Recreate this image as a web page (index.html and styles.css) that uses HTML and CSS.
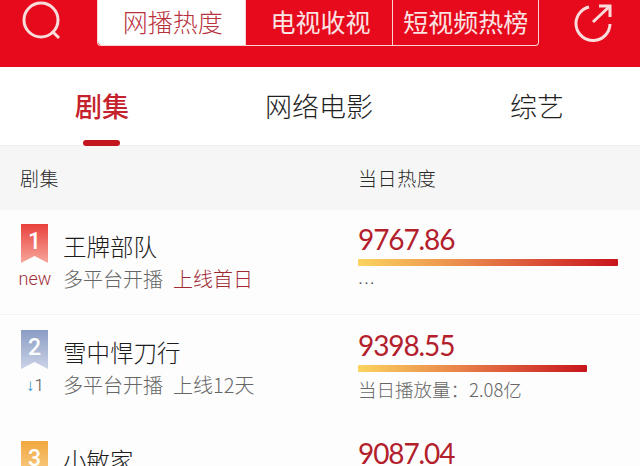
FILE: index.html
```html
<!DOCTYPE html>
<html lang="zh-CN">
<head>
    <meta charset="UTF-8">
    <title>网播热度</title>
    <link rel="stylesheet" href="styles.css">
</head>
<body>
    <header class="topbar">
        <svg class="icon" width="44" height="44" viewBox="0 0 44 44">
            <circle cx="21" cy="20" r="17" fill="none" stroke="#fbdcdc" stroke-width="3"/>
            <path d="M32 31l7 7" fill="none" stroke="#fbdcdc" stroke-width="3"/>
        </svg>
        <nav class="switch">
            <span class="switch-item active">网播热度</span>
            <span class="switch-item">电视收视</span>
            <span class="switch-item">短视频热榜</span>
        </nav>
        <svg class="icon" width="44" height="44" viewBox="0 0 44 44">
            <path d="M17 7A17 17 0 1 0 38 24" fill="none" stroke="#fbdcdc" stroke-width="3"/>
            <path d="M21 22L38 6M27 6h11v11" fill="none" stroke="#fbdcdc" stroke-width="3"/>
        </svg>
    </header>

    <div class="tabs">
        <span class="tab current">剧集</span>
        <span class="tab">网络电影</span>
        <span class="tab">综艺</span>
    </div>

    <div class="table-head">
        <span>剧集</span>
        <span>当日热度</span>
    </div>

    <div class="row">
        <div class="rank">
            <div class="ribbon red">1</div>
            <div class="change new">new</div>
        </div>
        <div class="info">
            <div class="name">王牌部队</div>
            <div class="sub">多平台开播<em class="hot">上线首日</em></div>
        </div>
        <div class="heat">
            <div class="score">9767.86</div>
            <div class="bar" style="width: 260px"></div>
            <div class="note dots">···</div>
        </div>
    </div>

    <div class="row second">
        <div class="rank">
            <div class="ribbon blue">2</div>
            <div class="change"><b class="down">↓</b>1</div>
        </div>
        <div class="info">
            <div class="name">雪中悍刀行</div>
            <div class="sub">多平台开播<em>上线12天</em></div>
        </div>
        <div class="heat">
            <div class="score">9398.55</div>
            <div class="bar" style="width: 229px"></div>
            <div class="note">当日播放量：2.08亿</div>
        </div>
    </div>

    <div class="row third">
        <div class="rank">
            <div class="ribbon orange">3</div>
        </div>
        <div class="info">
            <div class="name">小敏家</div>
        </div>
        <div class="heat">
            <div class="score">9087.04</div>
        </div>
    </div>
</body>
</html>
```

FILE: styles.css
```css
* {
    box-sizing: border-box;
    margin: 0;
    padding: 0;
}

html, body {
    height: 466px;
    overflow: hidden;
}

body {
    font-family: "Noto Sans CJK SC", "Noto Sans", sans-serif;
    font-weight: 300;
    background: #fff;
    color: #222;
}

.topbar {
    height: 67px;
    background: #e60a1c;
    display: flex;
    align-items: flex-start;
    justify-content: space-between;
    padding-left: 20px;
    padding-right: 24px;
}

.icon {
    flex: none;
}

.switch {
    display: flex;
    width: 442px;
    height: 46px;
    border: 1px solid #f8d4d4;
    border-top: none;
    border-radius: 0 0 4px 4px;
    margin-left: 14px;
    margin-right: 14px;
}

.switch-item {
    flex: 148 1 0;
    font-size: 25px;
    line-height: 43px;
    text-align: center;
    color: #fbe3e3;
    font-weight: 400;
    border-left: 1px solid #f8d4d4;
    white-space: nowrap;
}

.switch-item:first-child {
    border-left: none;
    padding-left: 3px;
}

.switch-item:nth-child(2) {
    padding-left: 3px;
}

.switch-item:nth-child(3) {
    flex-basis: 2px;
}

.switch-item.active {
    background: #fff;
    color: #b8333e;
    font-weight: 300;
    border-radius: 0 0 0 4px;
}

.tabs {
    height: 79px;
    display: grid;
    grid-template-columns: 204px 230px 206px;
    border-bottom: 1px solid #f0f0f0;
}

.tab {
    font-size: 27px;
    line-height: 77px;
    text-align: center;
    color: #1f1f1f;
    position: relative;
}

.current {
    color: #c4222c;
    font-weight: 500;
}

.current::after {
    content: "";
    position: absolute;
    left: 83px;
    bottom: -1px;
    width: 37px;
    height: 6px;
    border-radius: 3px;
    background: #c4161f;
}

.table-head {
    height: 64px;
    background: #f6f6f6;
    display: grid;
    grid-template-columns: 338px 1fr;
    padding-left: 20px;
    font-size: 19px;
    line-height: 64px;
    color: #2a2a2a;
    letter-spacing: 0.6px;
}

.row {
    height: 105px;
    background: #fdfdfd;
    display: grid;
    grid-template-columns: 63px 295px 1fr;
    border-bottom: 1px solid #f4f4f4;
    padding-top: 14px;
}

.second {
    margin-top: 5px;
    height: 108px;
    border-bottom: none;
    padding-top: 10px;
}

.third {
    padding-top: 10px;
}

.third .ribbon {
    margin-top: 3px;
}

.rank {
    padding-left: 20px;
}

.ribbon {
    width: 27px;
    height: 39px;
    margin-left: 1px;
    color: #fff;
    text-align: center;
    font-family: "Roboto", sans-serif;
    font-weight: 500;
    font-size: 23px;
    line-height: 36px;
    clip-path: polygon(0 0, 100% 0, 100% 100%, 50% 82%, 0 100%);
}

.red {
    background: linear-gradient(#e8413c, #f7a79b);
}

.blue {
    background: linear-gradient(#8b9cc4, #cbd3e6);
}

.orange {
    background: linear-gradient(#f2a63e, #f9d596);
}

.change {
    width: 36px;
    margin-left: -3px;
    font-family: "Roboto", sans-serif;
    font-size: 17px;
    line-height: 24px;
    margin-top: 4px;
    color: #555;
    text-align: center;
}

.new {
    color: #a02f38;
    font-size: 18px;
}

.down {
    color: #2f96cc;
    font-size: 17px;
    font-weight: 700;
}

.info {
    padding-top: 5px;
}

.name {
    font-size: 23.5px;
    line-height: 34px;
    color: #1c1c1c;
}

.sub {
    font-size: 20px;
    line-height: 30px;
    color: #666;
    margin-top: 1px;
}

.sub em {
    font-style: normal;
    margin-left: 10px;
}

.sub .hot {
    color: #a02a34;
}

.score {
    font-family: "Lato", sans-serif;
    font-weight: 400;
    font-size: 28px;
    line-height: 32px;
    letter-spacing: -1.1px;
    color: #b3202c;
    margin-top: -1px;
}

.bar {
    height: 7px;
    margin-top: 4px;
    border-radius: 1px;
    background: linear-gradient(90deg, #fbd45e, #e8814a 45%, #c8141c);
}

.note {
    font-size: 18.5px;
    line-height: 30px;
    color: #666;
    margin-top: 2px;
}

.dots {
    font-family: "Roboto", sans-serif;
    font-size: 20px;
    line-height: 30px;
    color: #444;
    letter-spacing: 1px;
}
```
